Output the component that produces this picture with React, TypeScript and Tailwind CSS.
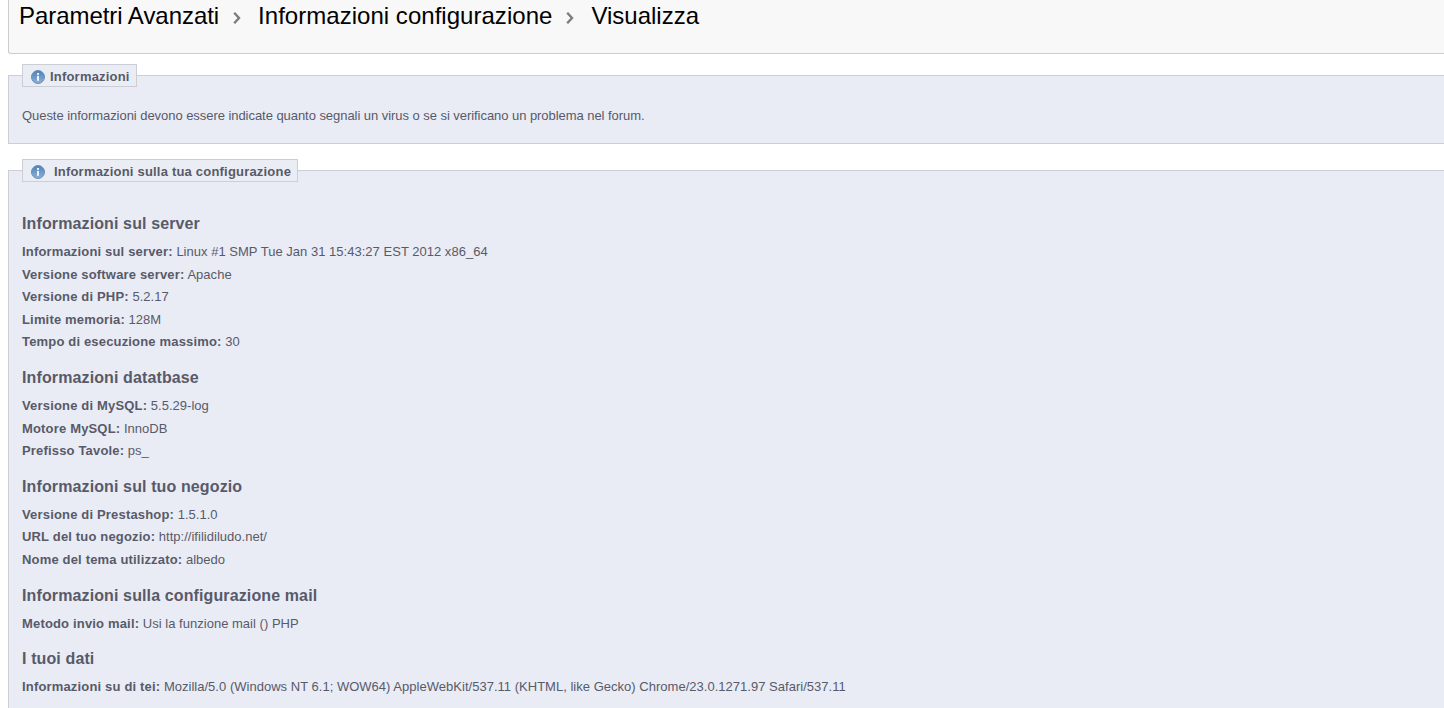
const sections = [
  {
    title: "Informazioni sul server",
    rows: [
      ["Informazioni sul server:", "Linux #1 SMP Tue Jan 31 15:43:27 EST 2012 x86_64"],
      ["Versione software server:", "Apache"],
      ["Versione di PHP:", "5.2.17"],
      ["Limite memoria:", "128M"],
      ["Tempo di esecuzione massimo:", "30"],
    ],
  },
  {
    title: "Informazioni datatbase",
    rows: [
      ["Versione di MySQL:", "5.5.29-log"],
      ["Motore MySQL:", "InnoDB"],
      ["Prefisso Tavole:", "ps_"],
    ],
  },
  {
    title: "Informazioni sul tuo negozio",
    rows: [
      ["Versione di Prestashop:", "1.5.1.0"],
      ["URL del tuo negozio:", "http://ifilidiludo.net/"],
      ["Nome del tema utilizzato:", "albedo"],
    ],
  },
  {
    title: "Informazioni sulla configurazione mail",
    rows: [["Metodo invio mail:", "Usi la funzione mail () PHP"]],
  },
  {
    title: "I tuoi dati",
    rows: [
      [
        "Informazioni su di tei:",
        "Mozilla/5.0 (Windows NT 6.1; WOW64) AppleWebKit/537.11 (KHTML, like Gecko) Chrome/23.0.1271.97 Safari/537.11",
      ],
    ],
  },
];

function InfoIcon() {
  return (
    <svg width="14" height="14" viewBox="0 0 14 14" className="shrink-0">
      <defs>
        <linearGradient id="info" x1="0" y1="0" x2="0" y2="1">
          <stop offset="0%" stopColor="#4d80bb" />
          <stop offset="100%" stopColor="#8db2da" />
        </linearGradient>
      </defs>
      <circle cx="7" cy="7" r="6.5" fill="url(#info)" stroke="#6f8fb3" />
      <rect x="6" y="3" width="2" height="1.8" fill="#eef4fb" />
      <rect x="6" y="5.8" width="2" height="5" fill="#eef4fb" />
    </svg>
  );
}

function Chevron() {
  return (
    <svg width="8" height="12" viewBox="0 0 8 12" className="mt-[12px] ml-[14px] mr-[17px] shrink-0">
      <path d="M1.2 0.8 L6 6 L1.2 11.2" fill="none" stroke="#7d7d7d" strokeWidth="2.4" />
    </svg>
  );
}

export default function App() {
  return (
    <div className="h-[708px] overflow-hidden bg-white pl-2 font-['Liberation_Sans',Arial,sans-serif] text-[13px] text-[#585a69]">
      <div className="h-[54px] bg-[#f8f8f8] border-l border-b border-[#cccccc] rounded-bl-[3px] pl-[10px] flex items-start text-[24px] leading-[32px] text-black">
        <span className="tracking-[-0.05px]">Parametri Avanzati</span>
        <Chevron />
        <span className="tracking-[0.03px]">Informazioni configurazione</span>
        <Chevron />
        <span>Visualizza</span>
      </div>

      <div className="mt-[21px] h-[69px] bg-[#e9ecf5] border-l border-t border-b border-[#ccced7] pl-[13px]">
        <div className="-mt-[12px] w-[115px] h-[23px] pt-[2px] bg-[#ebedf4] border border-[#ccced7] flex items-center gap-[5px] pl-2 font-bold tracking-[0.2px]">
          <InfoIcon />
          <span>Informazioni</span>
        </div>
        <p className="mt-[21px] leading-[15px] tracking-[-0.05px]">
          Queste informazioni devono essere indicate quanto segnali un virus o se si verificano un problema nel forum.
        </p>
      </div>

      <div className="mt-[26px] h-[600px] bg-[#e9ecf5] border-l border-t border-[#ccced7] pl-[13px]">
        <div className="-mt-[12px] w-[276px] h-[23px] pt-[2px] bg-[#ebedf4] border border-[#ccced7] flex items-center gap-[9px] pl-2 font-bold tracking-[0.2px]">
          <InfoIcon />
          <span>Informazioni sulla tua configurazione</span>
        </div>
        <div className="mt-[32.3px] flex flex-col gap-[14.3px]">
          {sections.map((section) => (
            <div key={section.title}>
              <h3 className="font-bold text-base leading-[20px] mb-[7px] tracking-[0.12px]">{section.title}</h3>
              {section.rows.map((row) => (
                <p key={row[0]} className="leading-[22.5px] tracking-[0.02px]">
                  <b className="tracking-[0.17px]">{row[0]}</b> {row[1]}
                </p>
              ))}
            </div>
          ))}
        </div>
      </div>
    </div>
  );
}
